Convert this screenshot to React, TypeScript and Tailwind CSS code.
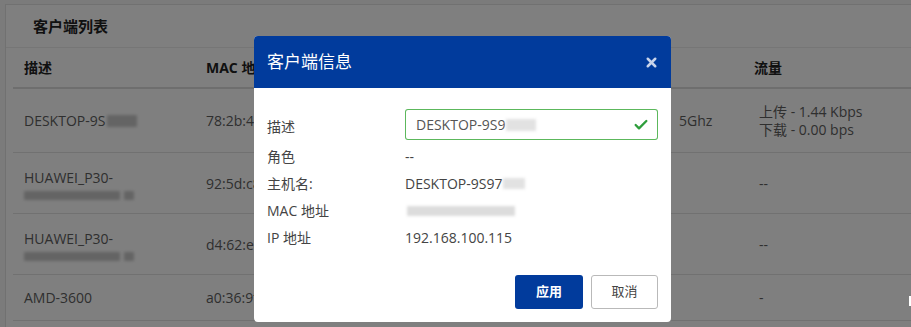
import { Check, X } from 'lucide-react';

const font = { fontFamily: '"Open Sans", "Noto Sans CJK SC", sans-serif' };

function Blur({ className }: { className: string }) {
  return <span className={`inline-block bg-[#c9c9c9] blur-[1.5px] align-middle ${className}`} />;
}

interface Row {
  desc: React.ReactNode;
  mac: string;
  band: string;
  traffic: React.ReactNode;
  h: string;
}

const rows: Row[] = [
  {
    desc: (
      <span className="flex items-center">
        DESKTOP-9S
        <Blur className="ml-[2px] h-[12px] w-[30px]" />
      </span>
    ),
    mac: '78:2b:46:00:00:00',
    band: '5Ghz',
    traffic: (
      <div className="leading-[18px]">
        <div>上传 - 1.44 Kbps</div>
        <div>下载 - 0.00 bps</div>
      </div>
    ),
    h: 'h-[64px]',
  },
  {
    desc: (
      <div className="leading-[22px]">
        <div>HUAWEI_P30-</div>
        <div className="flex items-center gap-[4px] pt-[2px]">
          <Blur className="h-[9px] w-[96px]" />
          <Blur className="h-[9px] w-[10px]" />
        </div>
      </div>
    ),
    mac: '92:5d:c8:00:00:00',
    band: '',
    traffic: '--',
    h: 'h-[61px]',
  },
  {
    desc: (
      <div className="leading-[22px]">
        <div>HUAWEI_P30-</div>
        <div className="flex items-center gap-[4px] pt-[2px]">
          <Blur className="h-[9px] w-[96px]" />
          <Blur className="h-[9px] w-[10px]" />
        </div>
      </div>
    ),
    mac: 'd4:62:ea:00:00:00',
    band: '',
    traffic: '--',
    h: 'h-[61px]',
  },
  {
    desc: 'AMD-3600',
    mac: 'a0:36:9f:00:00:00',
    band: '',
    traffic: '-',
    h: 'h-[46px]',
  },
];

function InfoRow({ label, children }: { label: string; children: React.ReactNode }) {
  return (
    <div className="flex h-[27px] items-center">
      <div className="w-[138px] shrink-0">{label}</div>
      <div className="flex items-center">{children}</div>
    </div>
  );
}

export default function App() {
  return (
    <div className="relative h-[327px] w-[911px] overflow-hidden bg-[#f6f6f6] text-[14px]" style={font}>
      {/* Page underneath */}
      <div className="ml-[5px] mt-[4px] h-[330px] w-[920px] border-l border-t border-[#e3e3e3] bg-white">
        <div className="flex h-[43px] items-center border-b border-[#ececec] pl-[27px] text-[15px] font-bold text-[#222]">
          客户端列表
        </div>
        <div className="px-[7px]">
          <div className="flex h-[41px] items-center border-b-2 border-[#dcdcdc] font-bold text-[#222]">
            <div className="w-[193px] pl-[11px]">描述</div>
            <div className="w-[200px]">MAC 地址</div>
            <div className="w-[155px]">IP 地址</div>
            <div className="w-[193px]">频段</div>
            <div>流量</div>
          </div>
          {rows.map((r, i) => (
            <div key={i} className={`flex items-center border-b border-[#e3e3e3] text-[#5e5e5e] ${r.h}`}>
              <div className="w-[193px] pl-[11px]">{r.desc}</div>
              <div className="w-[200px]">{r.mac}</div>
              <div className="w-[155px]" />
              <div className="w-[193px] pl-[118px]">{r.band}</div>
              <div className="pl-[5px]">{r.traffic}</div>
            </div>
          ))}
        </div>
      </div>

      {/* Backdrop */}
      <div className="absolute inset-0 bg-black/50" />
      <div className="absolute right-0 top-[296px] h-[10px] w-[2px] bg-white" />

      {/* Modal */}
      <div className="absolute left-[254px] top-[36px] flex h-[286px] w-[417px] flex-col overflow-hidden rounded-[4px] bg-white">
        <div className="flex h-[52px] shrink-0 items-center justify-between bg-[#013b9c] pl-[13px] pr-[12px]">
          <span className="text-[17px] text-white">客户端信息</span>
          <X className="h-[15px] w-[15px] text-[#c8d3ea]" strokeWidth={4} />
        </div>
        <div className="flex flex-1 flex-col px-[13px] pb-[13px] pt-[21px] text-[#444]">
          <div className="flex h-[31px] items-center">
            <div className="w-[138px] shrink-0 pt-[4px]">描述</div>
            <div className="flex h-[31px] flex-1 items-center justify-between rounded-[3px] ring-1 ring-inset ring-[#5cb85c] pl-[11px] pr-[9px] text-[#555]">
              <span className="flex items-center">
                DESKTOP-9S9
                <Blur className="ml-[1px] h-[12px] w-[30px] bg-[#e2e2e2]" />
              </span>
              <Check className="h-[16px] w-[16px] text-[#2e9e3c]" strokeWidth={3.5} />
            </div>
          </div>
          <div className="mt-[3px]">
            <InfoRow label="角色">--</InfoRow>
            <InfoRow label="主机名:">
              DESKTOP-9S97
              <Blur className="ml-[1px] h-[11px] w-[22px] bg-[#e2e2e2]" />
            </InfoRow>
            <InfoRow label="MAC 地址">
              <Blur className="ml-[2px] h-[10px] w-[108px] bg-[#dcdcdc]" />
            </InfoRow>
            <InfoRow label="IP 地址">192.168.100.115</InfoRow>
          </div>
          <div className="mt-auto flex justify-end gap-[8px]">
            <button className="h-[34px] w-[68px] rounded-[3px] bg-[#013b9c] text-[13px] font-bold text-white">
              应用
            </button>
            <button className="h-[34px] w-[67px] rounded-[3px] border border-[#b9b9b9] bg-white text-[13px] text-[#444]">
              取消
            </button>
          </div>
        </div>
      </div>
    </div>
  );
}
